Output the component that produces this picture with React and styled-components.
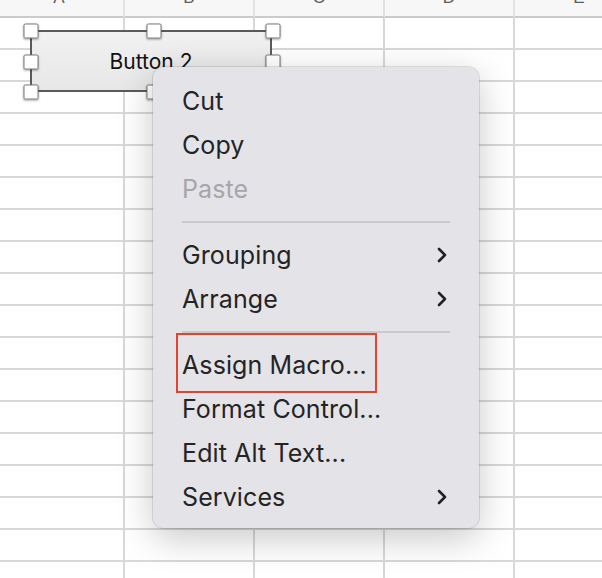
import React from 'react'
import { styled, createGlobalStyle } from 'styled-components'

const GlobalStyle = createGlobalStyle`
    html, body {
        margin: 0;
        padding: 0;
        background: #ffffff;
        overflow: hidden;
    }
    body {
        font-family: "Liberation Sans", Arial, sans-serif;
    }
`

const COLUMNS = ['A', 'B', 'C', 'D', 'E']
const ROW_COUNT = 18

const Page = styled.div`
    position: relative;
    width: 602px;
    height: 578px;
    overflow: hidden;
`
const Sheet = styled.div`
    margin-left: -5px;
    display: grid;
    grid-template-columns: repeat(5, 130px);
`
const HeaderCell = styled.div`
    height: 16px;
    overflow: hidden;
    display: flex;
    align-items: flex-end;
    justify-content: center;
    background: #f7f7f7;
    border-bottom: 2px solid #cbcbcb;
    border-right: 2px solid #e2e2e2;
`
const HeaderLetter = styled.span`
    font-size: 17px;
    line-height: 1;
    margin-bottom: 10px;
    color: #5c5c5c;
`
const Cell = styled.div`
    height: 30px;
    border-bottom: 2px solid #d8d8d8;
    border-right: 2px solid #d8d8d8;
`

const Shape = styled.div`
    position: absolute;
    left: 30px;
    top: 30px;
    width: 238px;
    height: 58px;
    border: 2px solid #5a5a5a;
    background: linear-gradient(#f1f1f1, #e7e7e7);
    display: flex;
    align-items: center;
    justify-content: center;
    font-family: Inter, "Liberation Sans", sans-serif;
    font-size: 21px;
    color: #111;
`
const Handle = styled.span`
    position: absolute;
    width: 13px;
    height: 13px;
    background: #ffffff;
    border: 1px solid #7a7a7a;
    border-radius: 2px;
    box-shadow: 0 1px 2px rgba(0, 0, 0, 0.25);
    left: ${p => p.$x}px;
    top: ${p => p.$y}px;
    transform: translate(-50%, -50%);
`

const Menu = styled.div`
    position: absolute;
    left: 153px;
    top: 67px;
    width: 326px;
    box-sizing: border-box;
    padding: 12px 0 9px;
    background: #e4e3e8;
    border-radius: 11px;
    box-shadow: 0 0 0 1px rgba(0, 0, 0, 0.1), 0 10px 36px rgba(0, 0, 0, 0.22);
    font-family: Inter, "Liberation Sans", sans-serif;
`
const Item = styled.div`
    position: relative;
    height: 44px;
    display: flex;
    align-items: center;
    justify-content: space-between;
    padding: 0 31px 0 29px;
    font-size: 25px;
    letter-spacing: 0.1px;
    color: ${p => (p.$disabled ? '#a7a6aa' : '#242424')};
`
const Marker = styled.span`
    position: absolute;
    left: 23px;
    top: -10px;
    width: 201px;
    height: 60px;
    box-sizing: border-box;
    border: 2px solid #e6432f;
`
const Separator = styled.div`
    height: 22px;
    display: flex;
    align-items: center;
    padding: 0 29px;

    &::before {
        content: '';
        flex: 1;
        height: 2px;
        background: #cacacd;
    }
`

const Chevron = () => (
    <svg width="12" height="18" viewBox="0 0 12 18">
        <path d="M3 3 L9 9 L3 15" fill="none" stroke="#222" strokeWidth="2.6" strokeLinecap="round" strokeLinejoin="round" />
    </svg>
)

const menuItems = [
    { label: 'Cut' },
    { label: 'Copy' },
    { label: 'Paste', disabled: true },
    { separator: true },
    { label: 'Grouping', submenu: true },
    { label: 'Arrange', submenu: true },
    { separator: true },
    { label: 'Assign Macro...', marked: true },
    { label: 'Format Control...' },
    { label: 'Edit Alt Text...' },
    { label: 'Services', submenu: true },
]

const handles = [
    [0, 0], [123, 0], [242, 0],
    [0, 31], [242, 31],
    [0, 61], [123, 61],
]

const App = () => {
    return (
        <>
            <GlobalStyle />
            <Page>
                <Sheet>
                    {COLUMNS.map(c => (
                        <HeaderCell key={c}><HeaderLetter>{c}</HeaderLetter></HeaderCell>
                    ))}
                    {Array.from({ length: ROW_COUNT * COLUMNS.length }).map((_, i) => (
                        <Cell key={i} />
                    ))}
                </Sheet>

                <Shape>
                    Button 2
                    {handles.map(([x, y], i) => (
                        <Handle key={i} $x={x - 1} $y={y - 1} />
                    ))}
                </Shape>

                <Menu>
                    {menuItems.map((item, i) =>
                        item.separator ? (
                            <Separator key={i} />
                        ) : (
                            <Item key={i} $disabled={item.disabled}>
                                {item.marked && <Marker />}
                                <span>{item.label}</span>
                                {item.submenu && <Chevron />}
                            </Item>
                        )
                    )}
                </Menu>
            </Page>
        </>
    )
}

export default App
